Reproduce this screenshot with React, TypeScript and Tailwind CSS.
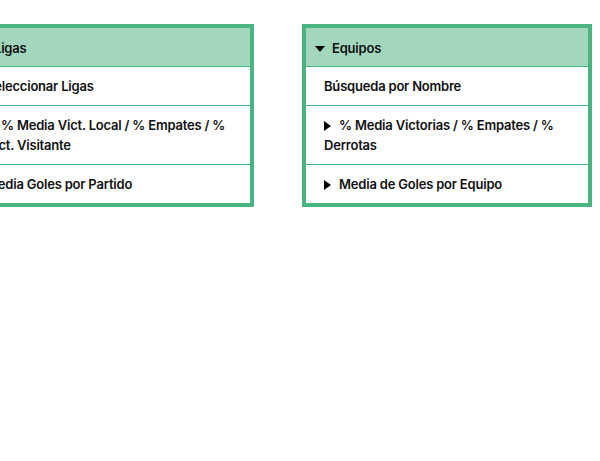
const Arrow = ({down = false}: {down?: boolean}) => (
    <svg
        viewBox="0 0 10 10"
        className={down ? "inline-block w-[10px] h-[10px] mr-[7px] align-[-1px]" : "inline-block w-[7px] h-[10px] mr-[8px] align-[-1px]"}
        preserveAspectRatio="none"
    >
        {down ? <path d="M0 2 L10 2 L5 8 Z" fill="#000"/> : <path d="M0 0 L10 5 L0 10 Z" fill="#000"/>}
    </svg>
);

type Item = { label: string; arrow?: boolean };

const Panel = ({title, items}: { title: string; items: Item[] }) => (
    <div className="w-[290px] shrink-0 border-4 border-[#48b482] bg-white">
        <div className="bg-[#a2d7bd] pl-[9px] pr-3 pt-[10px] pb-[8px] leading-[20px] border-b border-[#48b482]">
            <Arrow down/>
            {title}
        </div>
        {items.map((item, i) => (
            <div
                key={i}
                className={`pl-[18px] pr-3 py-[9px] leading-[20px] ${i < items.length - 1 ? "border-b border-[#48b482]" : ""}`}
            >
                {item.arrow && <Arrow/>}
                {item.label}
            </div>
        ))}
    </div>
);

export default function App() {
    return (
        <div
            className="w-[600px] h-[461px] overflow-hidden bg-white text-[13px] font-semibold tracking-[-0.2px] text-[#111]"
            style={{fontFamily: "Inter, 'Noto Sans', sans-serif"}}
        >
            <div className="flex gap-[48px] ml-[-36px] pt-[24px]">
                <Panel
                    title="Ligas"
                    items={[
                        {label: "Seleccionar Ligas"},
                        {label: "% Media Vict. Local / % Empates / % Vict. Visitante", arrow: true},
                        {label: "Media Goles por Partido"},
                    ]}
                />
                <Panel
                    title="Equipos"
                    items={[
                        {label: "Búsqueda por Nombre"},
                        {label: "% Media Victorias / % Empates / % Derrotas", arrow: true},
                        {label: "Media de Goles por Equipo", arrow: true},
                    ]}
                />
            </div>
        </div>
    );
}
